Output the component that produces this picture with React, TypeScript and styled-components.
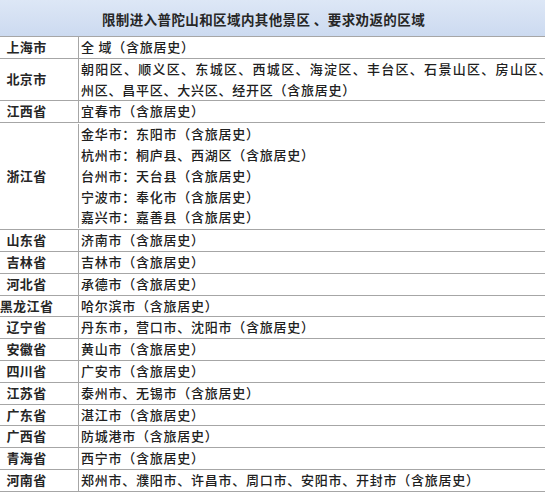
import React from 'react';
import styled, { createGlobalStyle } from 'styled-components';

const Global = createGlobalStyle`
  html, body { margin: 0; padding: 0; background: #ffffff; }
  body {
    width: 545px;
    height: 500px;
    overflow: hidden;
    font-family: "Noto Sans CJK SC", "Noto Sans", sans-serif;
  }
`;

const Sheet = styled.div`
  margin-left: -25px;
  width: 595px;
  color: #262626;
`;

const Header = styled.div`
  height: 37px;
  box-sizing: border-box;
  border-bottom: 1px solid #a6a6a6;
  background: linear-gradient(180deg, #dde7f6 0%, #ccdaf0 100%);
  display: flex;
  align-items: center;
  justify-content: center;
  padding-right: 18px;
  padding-top: 1px;
  font-size: 13.5px;
  font-weight: 700;
  letter-spacing: 0.4px;
  color: #262626;
`;

const Row = styled.div<{ $multi?: boolean }>`
  display: grid;
  grid-template-columns: 104px 1fr;
  border-bottom: 1px solid #a6a6a6;
  padding: ${p => (p.$multi ? '1px 0' : '0')};
`;

const Region = styled.div`
  box-sizing: border-box;
  border-right: 1px solid #a6a6a6;
  margin: ${'0'};
  display: flex;
  align-items: center;
  justify-content: center;
  font-size: 13px;
  font-weight: 700;
  line-height: 20.8px;
  letter-spacing: 0.4px;
  white-space: nowrap;
`;

const Detail = styled.div`
  padding-left: 2px;
  padding-right: 4px;
  font-size: 13px;
  font-weight: 500;
  letter-spacing: 0.75px;
  color: #202020;
`;

const Line = styled.div<{ $justify?: boolean }>`
  line-height: 20.8px;
  white-space: ${p => (p.$justify ? 'normal' : 'nowrap')};
  text-align: ${p => (p.$justify ? 'justify' : 'left')};
  text-align-last: ${p => (p.$justify ? 'justify' : 'auto')};
  letter-spacing: ${p => (p.$justify ? '0.2px' : 'inherit')};
`;

type RowData = { region: string; lines: string[]; justifyFirst?: boolean };

const rows: RowData[] = [
  { region: '上海市', lines: ['全 域（含旅居史）'] },
  {
    region: '北京市',
    lines: [
      '朝阳区、顺义区、东城区、西城区、海淀区、丰台区、石景山区、房山区、通',
      '州区、昌平区、大兴区、经开区（含旅居史）',
    ],
    justifyFirst: true,
  },
  { region: '江西省', lines: ['宜春市（含旅居史）'] },
  {
    region: '浙江省',
    lines: [
      '金华市：东阳市（含旅居史）',
      '杭州市：桐庐县、西湖区（含旅居史）',
      '台州市：天台县（含旅居史）',
      '宁波市：奉化市（含旅居史）',
      '嘉兴市：嘉善县（含旅居史）',
    ],
  },
  { region: '山东省', lines: ['济南市（含旅居史）'] },
  { region: '吉林省', lines: ['吉林市（含旅居史）'] },
  { region: '河北省', lines: ['承德市（含旅居史）'] },
  { region: '黑龙江省', lines: ['哈尔滨市（含旅居史）'] },
  { region: '辽宁省', lines: ['丹东市，营口市、沈阳市（含旅居史）'] },
  { region: '安徽省', lines: ['黄山市（含旅居史）'] },
  { region: '四川省', lines: ['广安市（含旅居史）'] },
  { region: '江苏省', lines: ['泰州市、无锡市（含旅居史）'] },
  { region: '广东省', lines: ['湛江市（含旅居史）'] },
  { region: '广西省', lines: ['防城港市（含旅居史）'] },
  { region: '青海省', lines: ['西宁市（含旅居史）'] },
  {
    region: '河南省',
    lines: ['郑州市、濮阳市、许昌市、周口市、安阳市、开封市（含旅居史）'],
  },
];

export default function App() {
  return (
    <>
      <Global />
      <Sheet lang="zh-CN">
        <Header>限制进入普陀山和区域内其他景区 、要求劝返的区域</Header>
        {rows.map(r => (
          <Row key={r.region} $multi={r.lines.length > 2}>
            <Region>{r.region}</Region>
            <Detail>
              {r.lines.map((l, i) => (
                <Line key={i} $justify={r.justifyFirst && i === 0}>
                  {l}
                </Line>
              ))}
            </Detail>
          </Row>
        ))}
      </Sheet>
    </>
  );
}
